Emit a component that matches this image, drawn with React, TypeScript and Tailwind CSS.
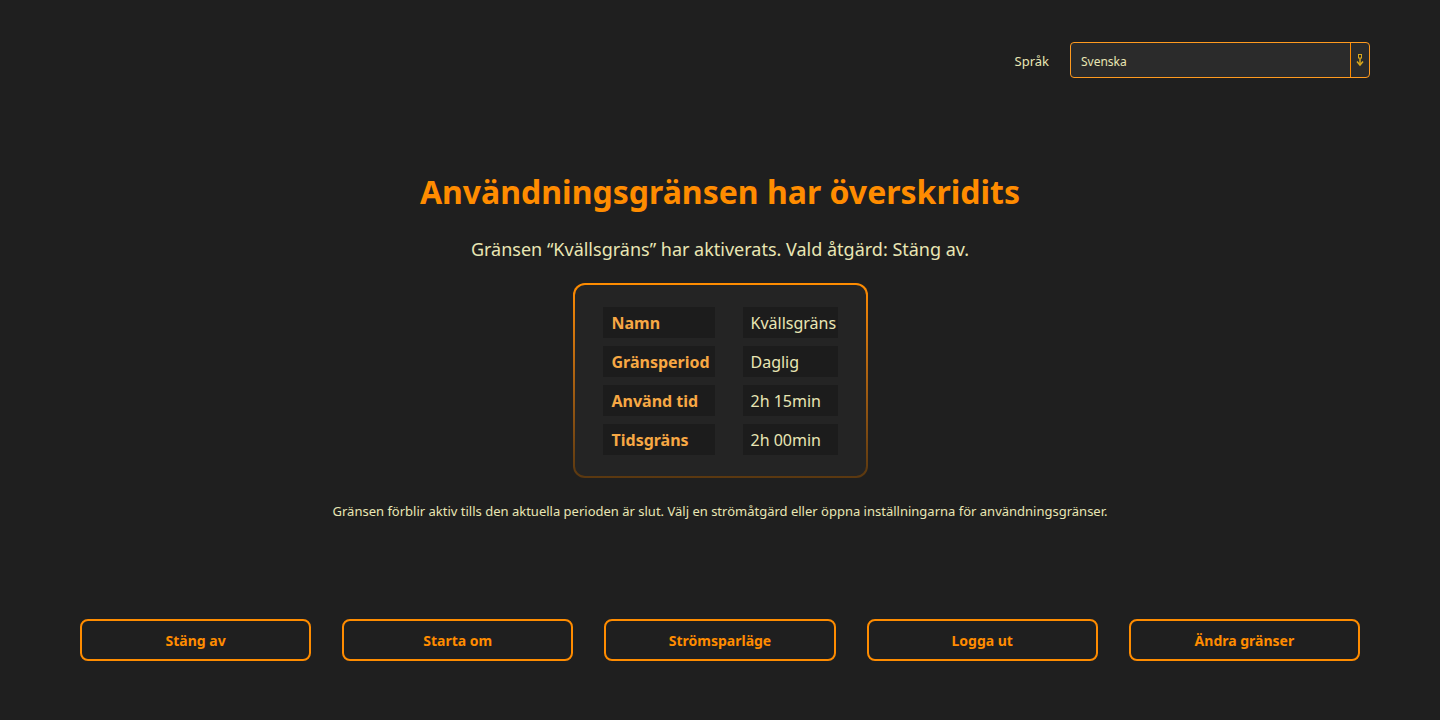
import React from 'react';

const ROWS: { label: string; value: string }[] = [
  { label: 'Namn', value: 'Kvällsgräns' },
  { label: 'Gränsperiod', value: 'Daglig' },
  { label: 'Använd tid', value: '2h 15min' },
  { label: 'Tidsgräns', value: '2h 00min' },
];

const ACTIONS = ['Stäng av', 'Starta om', 'Strömsparläge', 'Logga ut', 'Ändra gränser'];

function ArrowIcon() {
  return (
    <svg width="8" height="14" viewBox="0 0 8 14" fill="none">
      <rect x="2.5" y="1.5" width="3" height="3.5" stroke="#d9a81c" strokeWidth="1" />
      <path d="M4 5v6" stroke="#d9a81c" strokeWidth="1.5" />
      <path d="M1 8.5L4 12l3-3.5" stroke="#d9a81c" strokeWidth="1.5" fill="none" />
    </svg>
  );
}

export default function App() {
  return (
    <div
      className="flex h-[720px] w-full flex-col bg-[#1f1f1f] text-[#e9e6b4]"
      style={{ fontFamily: '"Noto Sans", "Open Sans", sans-serif' }}
    >
      {/* language picker */}
      <div className="flex items-center justify-end gap-[21px] pr-[70px] pt-[42px]">
        <span className="pt-[3px] text-[13px]">Språk</span>
        <div className="flex h-[36px] w-[300px] items-stretch rounded-[4px] border border-[#ff9a1f] bg-[#2b2b2b]">
          <div className="flex flex-1 items-center pt-[3px] pl-[10px] text-[12px]">Svenska</div>
          <div className="flex w-[19px] items-center justify-center border-l border-[#ff8c00]">
            <ArrowIcon />
          </div>
        </div>
      </div>

      <h1 className="mt-[94px] text-center text-[32px] leading-[40px] font-bold text-[#ff8c00]">
        Användningsgränsen har överskridits
      </h1>
      <p className="mt-[25px] text-center text-[18px] leading-[24px]">
        Gränsen “Kvällsgräns” har aktiverats. Vald åtgärd: Stäng av.
      </p>

      <div className="mt-[22px] flex justify-center">
        <div className="rounded-[12px] bg-gradient-to-b from-[#ff8c00] to-[#5a3810] p-[2px]">
          <div className="rounded-[10px] bg-[#242424] px-[28px] pt-[22px] pb-[21px]">
            <div className="grid grid-cols-[112px_95px] gap-x-[28px] gap-y-[8px]">
              {ROWS.map((r) => (
                <React.Fragment key={r.label}>
                  <div className="flex h-[31px] items-center bg-[#1c1c1c] pl-[9px] text-[16px] font-bold text-[#f7a844]">
                    {r.label}
                  </div>
                  <div className="flex h-[31px] items-center bg-[#1c1c1c] pl-[8px] text-[16px]">
                    {r.value}
                  </div>
                </React.Fragment>
              ))}
            </div>
          </div>
        </div>
      </div>

      <p className="mt-[24px] text-center text-[13px] leading-[18px]">
        Gränsen förblir aktiv tills den aktuella perioden är slut. Välj en strömåtgärd eller öppna inställningarna för användningsgränser.
      </p>

      <div className="mt-[99px] flex gap-[31px] pl-[80px] pr-[80px]">
        {ACTIONS.map((a) => (
          <button
            key={a}
            type="button"
            className="h-[42px] flex-1 rounded-[8px] border-2 border-[#ff8c00] text-[14px] font-bold text-[#ff8c00]"
          >
            {a}
          </button>
        ))}
      </div>
    </div>
  );
}
